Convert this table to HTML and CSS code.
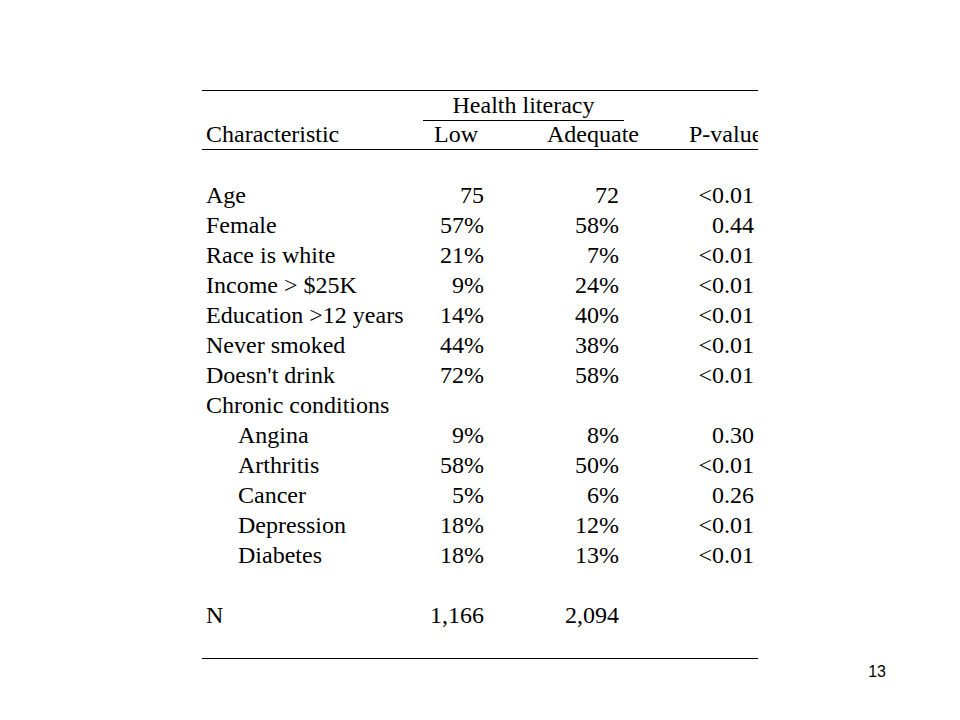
FILE: index.html
```html
<!DOCTYPE html>
<html>
<head>
<meta charset="utf-8">
<link rel="stylesheet" href="styles.css">
</head>
<body>
<div class="slide">
  <div class="tbl">
    <div class="hrow1">
      <div class="span">Health literacy</div>
    </div>
    <div class="hrow2">
      <div class="h-char">Characteristic</div>
      <div class="h-low">Low</div>
      <div class="h-adq">Adequate</div>
      <div class="h-p">P-value</div>
    </div>
    <div class="body">
      <div class="row"><div class="lbl">Age</div><div class="num">75</div><div class="num">72</div><div class="num">&lt;0.01</div></div>
      <div class="row"><div class="lbl">Female</div><div class="num">57%</div><div class="num">58%</div><div class="num">0.44</div></div>
      <div class="row"><div class="lbl">Race is white</div><div class="num">21%</div><div class="num">7%</div><div class="num">&lt;0.01</div></div>
      <div class="row"><div class="lbl">Income &gt; $25K</div><div class="num">9%</div><div class="num">24%</div><div class="num">&lt;0.01</div></div>
      <div class="row"><div class="lbl">Education &gt;12 years</div><div class="num">14%</div><div class="num">40%</div><div class="num">&lt;0.01</div></div>
      <div class="row"><div class="lbl">Never smoked</div><div class="num">44%</div><div class="num">38%</div><div class="num">&lt;0.01</div></div>
      <div class="row"><div class="lbl">Doesn't drink</div><div class="num">72%</div><div class="num">58%</div><div class="num">&lt;0.01</div></div>
      <div class="row"><div class="lbl">Chronic conditions</div><div class="num"></div><div class="num"></div><div class="num"></div></div>
      <div class="row"><div class="lbl sub">Angina</div><div class="num">9%</div><div class="num">8%</div><div class="num">0.30</div></div>
      <div class="row"><div class="lbl sub">Arthritis</div><div class="num">58%</div><div class="num">50%</div><div class="num">&lt;0.01</div></div>
      <div class="row"><div class="lbl sub">Cancer</div><div class="num">5%</div><div class="num">6%</div><div class="num">0.26</div></div>
      <div class="row"><div class="lbl sub">Depression</div><div class="num">18%</div><div class="num">12%</div><div class="num">&lt;0.01</div></div>
      <div class="row"><div class="lbl sub">Diabetes</div><div class="num">18%</div><div class="num">13%</div><div class="num">&lt;0.01</div></div>
      <div class="row blank"></div>
      <div class="row"><div class="lbl">N</div><div class="num">1,166</div><div class="num">2,094</div><div class="num"></div></div>
    </div>
  </div>
  <div class="pagenum">13</div>
</div>
</body>
</html>
```

FILE: styles.css
```css
html, body {
  margin: 0;
  padding: 0;
  background: #ffffff;
}
.slide {
  width: 960px;
  height: 720px;
  padding-top: 90px;
  box-sizing: border-box;
  font-family: "Liberation Serif", "Times New Roman", serif;
  color: #000;
}
.tbl {
  margin-left: 202px;
  width: 556px;
  overflow: hidden;
  border-top: 1px solid #000;
  border-bottom: 1px solid #000;
  font-size: 24px;
  padding-bottom: 28px;
}
.hrow1 {
  height: 29px;
  line-height: 29px;
  display: flex;
}
.hrow1 .span {
  margin-left: 221px;
  width: 201px;
  height: 29px;
  text-align: center;
  border-bottom: 1px solid #000;
  white-space: nowrap;
}
.hrow2 {
  height: 29px;
  line-height: 29px;
  border-bottom: 1px solid #000;
  display: grid;
  grid-template-columns: 228px 54px 156px 1fr;
  white-space: nowrap;
}
.h-char { padding-left: 4px; }
.h-low { text-align: right; padding-right: 6px; }
.h-adq { text-align: right; padding-right: 1px; }
.h-p { padding-left: 49px; }
.body {
  padding-top: 30px;
}
.row {
  display: grid;
  grid-template-columns: 228px 54px 135px 135px;
  height: 30px;
  line-height: 30px;
  white-space: nowrap;
}
.lbl { padding-left: 4px; }
.lbl.sub { padding-left: 36px; }
.num { text-align: right; }
.pagenum {
  margin-top: 4px;
  text-align: right;
  padding-right: 74px;
  font-family: "Liberation Sans", Arial, sans-serif;
  font-size: 16px;
  line-height: 18px;
}
```
